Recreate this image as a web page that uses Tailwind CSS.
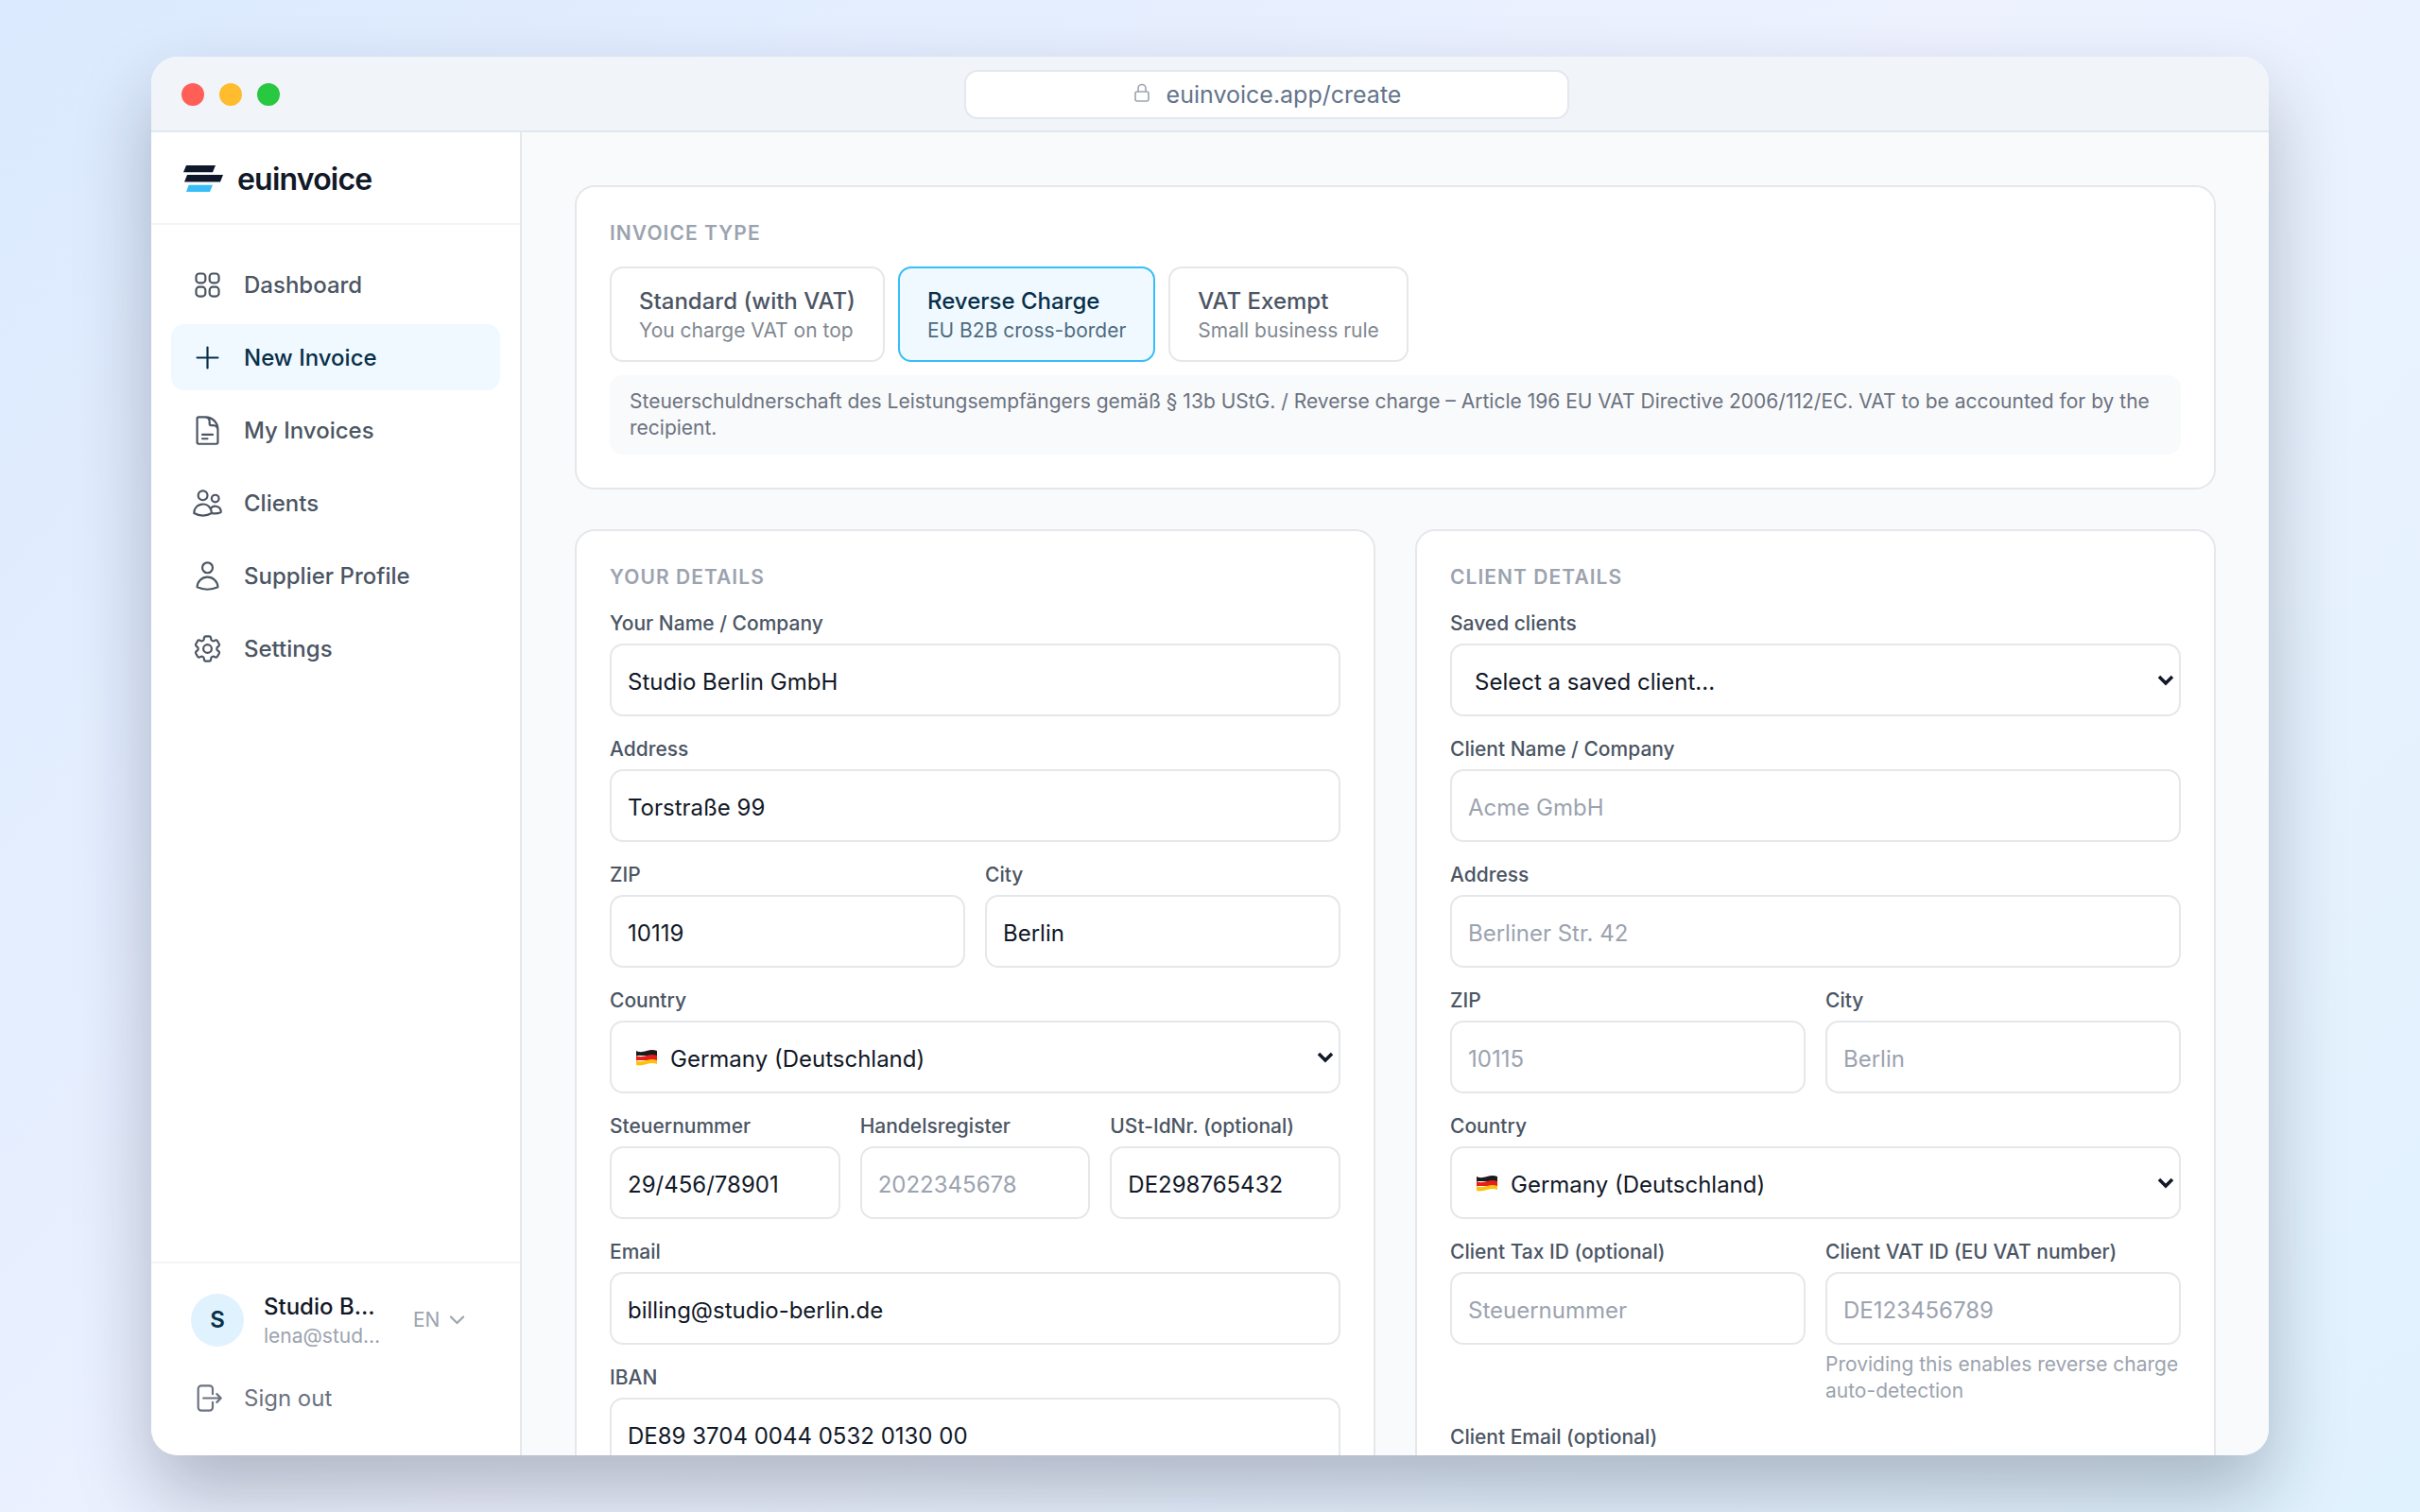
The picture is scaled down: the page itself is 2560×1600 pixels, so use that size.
<!DOCTYPE html>
<html lang="en">
<head>
    <meta charset="UTF-8">
    <meta name="viewport" content="width=device-width, initial-scale=1.0">
    <title>euinvoice - New Invoice</title>
    <!-- Tailwind CSS CDN -->
    <script src="https://cdn.jsdelivr.net/npm/@tailwindcss/browser@4"></script>
</head>
<body class="h-screen overflow-hidden bg-linear-135 from-[#dbeafe] via-[#eef2ff] to-[#e0f2fe] px-[160px] py-[60px] font-['Inter',sans-serif] text-[24px] leading-[35px] text-[#111827]">
    <!-- Browser window -->
    <div class="flex h-full flex-col overflow-hidden rounded-[28px] bg-white shadow-[0_40px_80px_rgba(15,23,42,0.27)]">
        <!-- Title bar -->
        <div class="flex h-[80px] shrink-0 items-center gap-4 border-b-2 border-slate-200 bg-slate-100 px-8 pt-[2px]">
            <div class="flex gap-4">
                <span class="size-6 rounded-full bg-[#ff5f57]"></span>
                <span class="size-6 rounded-full bg-[#febc2e]"></span>
                <span class="size-6 rounded-full bg-[#28c840]"></span>
            </div>
            <div class="flex flex-1 justify-center">
                <div class="flex h-[52px] w-[640px] items-center justify-center gap-4 rounded-[14px] border-2 border-slate-200 bg-white text-[25px] text-[#64748b]">
                    <svg class="mb-1 h-5 w-5 text-[#9ca3af]" viewBox="0 0 20 20" fill="none" stroke="currentColor" stroke-width="1.6">
                        <rect x="3" y="9" width="14" height="10" rx="2" />
                        <path d="M6 9V5.5a4 4 0 0 1 8 0V9" />
                    </svg>
                    <span>euinvoice.app/create</span>
                </div>
            </div>
        </div>

        <div class="flex min-h-0 flex-1">
            <!-- Sidebar -->
            <aside class="flex w-[392px] shrink-0 flex-col border-r-2 border-[#e5e7eb] bg-white">
                <a href="#" class="flex h-[98px] items-center gap-[15px] border-b-2 border-[#f3f4f6] px-[34px] pt-[2px] text-[32px] font-semibold tracking-tight">
                    <svg class="h-7 w-[42px]" viewBox="0 0 42 28">
                        <path fill="#0f172a" d="M3 0h31l-3 7.300H0zM4 10h38l-3 7.600H1z" />
                        <path fill="#38bdf8" d="M5.600 20.700h25.400l-3 7.300H3z" />
                    </svg>
                    euinvoice
                </a>
                <nav class="flex flex-1 flex-col gap-[7px] px-[21px] py-7 font-medium text-[#4b5563]">
                    <a href="#" class="flex h-[70px] items-center gap-[21px] rounded-[14px] px-[21px]">
                        <svg class="size-[35px]" viewBox="0 0 24 24" fill="none" stroke="currentColor" stroke-width="1.5" stroke-linecap="round" stroke-linejoin="round"><path d="M3.75 6A2.25 2.25 0 0 1 6 3.750h2.250A2.250 2.250 0 0 1 10.500 6v2.250a2.250 2.250 0 0 1-2.250 2.250H6a2.250 2.250 0 0 1-2.250-2.250V6ZM3.750 15.750A2.250 2.250 0 0 1 6 13.500h2.250a2.250 2.250 0 0 1 2.250 2.250V18a2.250 2.250 0 0 1-2.250 2.250H6A2.250 2.250 0 0 1 3.750 18v-2.250ZM13.500 6a2.250 2.250 0 0 1 2.250-2.250H18A2.250 2.250 0 0 1 20.250 6v2.250A2.250 2.250 0 0 1 18 10.500h-2.250a2.250 2.250 0 0 1-2.250-2.250V6ZM13.500 15.750a2.250 2.250 0 0 1 2.250-2.250H18a2.250 2.250 0 0 1 2.250 2.250V18A2.250 2.250 0 0 1 18 20.250h-2.250A2.250 2.250 0 0 1 13.500 18v-2.250Z" /></svg>
                        Dashboard
                    </a>
                    <a href="#" class="flex h-[70px] items-center gap-[21px] rounded-[14px] bg-[#f0f9ff] px-[21px] text-[#082f49]">
                        <svg class="size-[35px]" viewBox="0 0 24 24" fill="none" stroke="currentColor" stroke-width="1.5" stroke-linecap="round" stroke-linejoin="round"><path d="M12 4.500v15m7.500-7.500h-15" /></svg>
                        New Invoice
                    </a>
                    <a href="#" class="flex h-[70px] items-center gap-[21px] rounded-[14px] px-[21px]">
                        <svg class="size-[35px]" viewBox="0 0 24 24" fill="none" stroke="currentColor" stroke-width="1.5" stroke-linecap="round" stroke-linejoin="round"><path d="M19.500 14.250v-2.625a3.375 3.375 0 0 0-3.375-3.375h-1.500A1.125 1.125 0 0 1 13.500 7.125v-1.500a3.375 3.375 0 0 0-3.375-3.375H8.250m0 12.750h7.500m-7.500 3H12M10.500 2.250H5.625c-.621 0-1.125.504-1.125 1.125v17.250c0 .621.504 1.125 1.125 1.125h12.750c.621 0 1.125-.504 1.125-1.125V11.250a9 9 0 0 0-9-9Z" /></svg>
                        My Invoices
                    </a>
                    <a href="#" class="flex h-[70px] items-center gap-[21px] rounded-[14px] px-[21px]">
                        <svg class="size-[35px]" viewBox="0 0 24 24" fill="none" stroke="currentColor" stroke-width="1.5" stroke-linecap="round" stroke-linejoin="round"><path d="M15 19.128a9.380 9.380 0 0 0 2.625.372 9.337 9.337 0 0 0 4.121-.952 4.125 4.125 0 0 0-7.533-2.493M15 19.128v-.003c0-1.113-.285-2.160-.786-3.070M15 19.128v.106A12.318 12.318 0 0 1 8.624 21c-2.331 0-4.512-.645-6.374-1.766l-.001-.109a6.375 6.375 0 0 1 11.964-3.070M12 6.375a3.375 3.375 0 1 1-6.750 0 3.375 3.375 0 0 1 6.750 0Zm8.250 2.250a2.625 2.625 0 1 1-5.250 0 2.625 2.625 0 0 1 5.250 0Z" /></svg>
                        Clients
                    </a>
                    <a href="#" class="flex h-[70px] items-center gap-[21px] rounded-[14px] px-[21px]">
                        <svg class="size-[35px]" viewBox="0 0 24 24" fill="none" stroke="currentColor" stroke-width="1.5" stroke-linecap="round" stroke-linejoin="round"><path d="M15.750 6a3.750 3.750 0 1 1-7.500 0 3.750 3.750 0 0 1 7.500 0ZM4.501 20.118a7.500 7.500 0 0 1 14.998 0A17.933 17.933 0 0 1 12 21.750c-2.676 0-5.216-.584-7.499-1.632Z" /></svg>
                        Supplier Profile
                    </a>
                    <a href="#" class="flex h-[70px] items-center gap-[21px] rounded-[14px] px-[21px]">
                        <svg class="size-[35px]" viewBox="0 0 24 24" fill="none" stroke="currentColor" stroke-width="1.5" stroke-linecap="round" stroke-linejoin="round"><path d="M9.594 3.940c.09-.542.56-.94 1.110-.94h2.593c.55 0 1.020.398 1.110.94l.213 1.281c.063.374.313.686.645.87.074.04.147.083.22.127.325.196.72.257 1.075.124l1.217-.456a1.125 1.125 0 0 1 1.370.49l1.296 2.247a1.125 1.125 0 0 1-.26 1.431l-1.003.827c-.293.241-.438.613-.43.992a7.723 7.723 0 0 1 0 .255c-.008.378.137.75.43.991l1.004.827c.424.35.534.955.26 1.430l-1.298 2.247a1.125 1.125 0 0 1-1.369.491l-1.217-.456c-.355-.133-.75-.072-1.076.124a6.470 6.470 0 0 1-.22.128c-.331.183-.581.495-.644.869l-.213 1.281c-.09.543-.56.94-1.110.94h-2.594c-.55 0-1.019-.398-1.110-.94l-.213-1.281c-.062-.374-.312-.686-.644-.87a6.520 6.520 0 0 1-.22-.127c-.325-.196-.72-.257-1.076-.124l-1.217.456a1.125 1.125 0 0 1-1.369-.49l-1.297-2.247a1.125 1.125 0 0 1 .26-1.431l1.004-.827c.292-.24.437-.613.43-.991a6.932 6.932 0 0 1 0-.255c.007-.38-.138-.751-.43-.992l-1.004-.827a1.125 1.125 0 0 1-.26-1.430l1.297-2.247a1.125 1.125 0 0 1 1.370-.491l1.216.456c.356.133.751.072 1.076-.124.072-.044.146-.086.22-.128.332-.183.582-.495.644-.869l.214-1.280Z" /><path d="M15 12a3 3 0 1 1-6 0 3 3 0 0 1 6 0Z" /></svg>
                        Settings
                    </a>
                </nav>
                <div class="flex flex-col gap-4 border-t-2 border-[#f3f4f6] px-[21px] pt-7 pb-[26px]">
                    <div class="flex items-center px-[21px]">
                        <span class="flex size-14 shrink-0 items-center justify-center rounded-full bg-[#e0f2fe] font-semibold text-[#082f49]">S</span>
                        <div class="ml-[21px] w-[126px]">
                            <p class="truncate font-medium">Studio Berlin GmbH</p>
                            <p class="truncate text-[21px] leading-7 text-[#9ca3af]">lena@studio-berlin.de</p>
                        </div>
                        <button type="button" class="ml-8 flex items-center gap-2 text-[21px] text-[#9ca3af]">
                            EN
                            <svg class="size-[21px]" viewBox="0 0 24 24" fill="none" stroke="currentColor" stroke-width="2.5" stroke-linecap="round" stroke-linejoin="round"><path d="m19.500 8.500-7.500 7.500-7.500-7.500" /></svg>
                        </button>
                    </div>
                    <button type="button" class="flex h-[70px] items-center gap-[21px] px-[21px] text-[#6b7280]">
                        <svg class="size-[35px]" viewBox="0 0 24 24" fill="none" stroke="currentColor" stroke-width="1.5" stroke-linecap="round" stroke-linejoin="round"><path d="M15.750 9V5.250A2.250 2.250 0 0 0 13.500 3h-6a2.250 2.250 0 0 0-2.250 2.250v13.500A2.250 2.250 0 0 0 7.500 21h6a2.250 2.250 0 0 0 2.250-2.250V15m3 0 3-3m0 0-3-3m3 3H9" /></svg>
                        Sign out
                    </button>
                </div>
            </aside>

            <!-- Invoice form -->
            <main class="flex min-w-0 flex-1 flex-col gap-[42px] overflow-hidden bg-[#f9fafb] p-14">
                <section class="shrink-0 rounded-[21px] border-2 border-[#e5e7eb] bg-white p-[35px]">
                    <h2 class="mb-[21px] text-[21px] leading-7 font-semibold tracking-wider text-[#9ca3af] uppercase">Invoice Type</h2>
                    <div class="flex gap-[14px]">
                        <button type="button" class="rounded-[14px] border-2 border-[#e5e7eb] px-[29px] py-[17px] text-left text-[#4b5563]">
                            <span class="block font-medium">Standard (with VAT)</span>
                            <span class="block text-[21px] leading-7 opacity-70">You charge VAT on top</span>
                        </button>
                        <button type="button" class="rounded-[14px] border-2 border-[#38bdf8] bg-[#f0f9ff] px-[29px] py-[17px] text-left text-[#082f49]">
                            <span class="block font-medium">Reverse Charge</span>
                            <span class="block text-[21px] leading-7 opacity-70">EU B2B cross-border</span>
                        </button>
                        <button type="button" class="rounded-[14px] border-2 border-[#e5e7eb] px-[29px] py-[17px] text-left text-[#4b5563]">
                            <span class="block font-medium">VAT Exempt</span>
                            <span class="block text-[21px] leading-7 opacity-70">Small business rule</span>
                        </button>
                    </div>
                    <p class="mt-[14px] rounded-[14px] bg-[#f9fafb] px-[21px] py-[14px] text-[21px] leading-7 text-[#6b7280]">Steuerschuldnerschaft des Leistungsempfängers gemäß § 13b UStG. / Reverse charge – Article 196 EU VAT Directive 2006/112/EC. VAT to be accounted for by the recipient.</p>
                </section>

                <div class="grid grid-cols-2 gap-[42px]">
                    <!-- Supplier -->
                    <section class="flex flex-col gap-[21px] rounded-[21px] border-2 border-[#e5e7eb] bg-white p-[35px]">
                        <h2 class="text-[21px] leading-7 font-semibold tracking-wider text-[#9ca3af] uppercase">Your Details</h2>
                        <div>
                            <label for="name" class="mb-[7px] block text-[21px] leading-7 font-medium text-[#4b5563]">Your Name / Company</label>
                            <input id="name" type="text" value="Studio Berlin GmbH" class="h-[77px] w-full rounded-[14px] border-2 border-[#e5e7eb] px-[17px] pt-[3px]">
                        </div>
                        <div>
                            <label for="address" class="mb-[7px] block text-[21px] leading-7 font-medium text-[#4b5563]">Address</label>
                            <input id="address" type="text" value="Torstraße 99" class="h-[77px] w-full rounded-[14px] border-2 border-[#e5e7eb] px-[17px] pt-[3px]">
                        </div>
                        <div class="grid grid-cols-2 gap-[21px]">
                            <div>
                                <label for="zip" class="mb-[7px] block text-[21px] leading-7 font-medium text-[#4b5563]">ZIP</label>
                                <input id="zip" type="text" value="10119" class="h-[77px] w-full rounded-[14px] border-2 border-[#e5e7eb] px-[17px] pt-[3px]">
                            </div>
                            <div>
                                <label for="city" class="mb-[7px] block text-[21px] leading-7 font-medium text-[#4b5563]">City</label>
                                <input id="city" type="text" value="Berlin" class="h-[77px] w-full rounded-[14px] border-2 border-[#e5e7eb] px-[17px] pt-[3px]">
                            </div>
                        </div>
                        <div>
                            <label for="country" class="mb-[7px] block text-[21px] leading-7 font-medium text-[#4b5563]">Country</label>
                            <div class="relative">
                                <select id="country" class="h-[77px] w-full appearance-none rounded-[14px] border-2 border-[#e5e7eb] bg-white pt-[3px] pr-10 pl-[62px]">
                                    <option>Germany (Deutschland)</option>
                                </select>
                                <svg class="pointer-events-none absolute top-[30px] left-[27px] h-[18px] w-6" viewBox="0 0 24 18">
                                    <path fill="#1b1b1b" d="M1 2c4 2 7 1 11 0s7-1.500 11 0v5H1z" />
                                    <path fill="#e5201c" d="M1 7c4 2 7 1 11 0s7-1.500 11 0v5H1z" />
                                    <path fill="#fbc20e" d="M1 12c4 2 7 1 11 0s7-1.500 11 0v4c-4-1.500-7-1-11 0s-7 2-11 1z" />
                                </svg>
                                <svg class="pointer-events-none absolute top-[33px] right-[7px] h-3 w-[18px]" viewBox="0 0 18 12" fill="none" stroke="currentColor" stroke-width="3.500"><path d="m2 2 7 7 7-7" /></svg>
                            </div>
                        </div>
                        <div class="grid grid-cols-3 gap-[21px]">
                            <div>
                                <label for="tax" class="mb-[7px] block text-[21px] leading-7 font-medium text-[#4b5563]">Steuernummer</label>
                                <input id="tax" type="text" value="29/456/78901" class="h-[77px] w-full rounded-[14px] border-2 border-[#e5e7eb] px-[17px] pt-[3px]">
                            </div>
                            <div>
                                <label for="register" class="mb-[7px] block text-[21px] leading-7 font-medium text-[#4b5563]">Handelsregister</label>
                                <input id="register" type="text" placeholder="2022345678" class="h-[77px] w-full rounded-[14px] border-2 border-[#e5e7eb] px-[17px] pt-[3px] placeholder:text-[#9ca3af]">
                            </div>
                            <div>
                                <label for="vat" class="mb-[7px] block text-[21px] leading-7 font-medium text-[#4b5563]">USt-IdNr. (optional)</label>
                                <input id="vat" type="text" value="DE298765432" class="h-[77px] w-full rounded-[14px] border-2 border-[#e5e7eb] px-[17px] pt-[3px]">
                            </div>
                        </div>
                        <div>
                            <label for="email" class="mb-[7px] block text-[21px] leading-7 font-medium text-[#4b5563]">Email</label>
                            <input id="email" type="email" value="billing@studio-berlin.de" class="h-[77px] w-full rounded-[14px] border-2 border-[#e5e7eb] px-[17px] pt-[3px]">
                        </div>
                        <div>
                            <label for="iban" class="mb-[7px] block text-[21px] leading-7 font-medium text-[#4b5563]">IBAN</label>
                            <input id="iban" type="text" value="DE89 3704 0044 0532 0130 00" class="h-[77px] w-full rounded-[14px] border-2 border-[#e5e7eb] px-[17px] pt-[3px]">
                        </div>
                    </section>

                    <!-- Client -->
                    <section class="flex flex-col gap-[21px] rounded-[21px] border-2 border-[#e5e7eb] bg-white p-[35px]">
                        <h2 class="text-[21px] leading-7 font-semibold tracking-wider text-[#9ca3af] uppercase">Client Details</h2>
                        <div>
                            <label for="saved" class="mb-[7px] block text-[21px] leading-7 font-medium text-[#4b5563]">Saved clients</label>
                            <div class="relative">
                                <select id="saved" class="h-[77px] w-full appearance-none rounded-[14px] border-2 border-[#e5e7eb] bg-white pt-[3px] pr-10 pl-[24px]">
                                    <option>Select a saved client...</option>
                                </select>
                                <svg class="pointer-events-none absolute top-[33px] right-[7px] h-3 w-[18px]" viewBox="0 0 18 12" fill="none" stroke="currentColor" stroke-width="3.500"><path d="m2 2 7 7 7-7" /></svg>
                            </div>
                        </div>
                        <div>
                            <label for="client-name" class="mb-[7px] block text-[21px] leading-7 font-medium text-[#4b5563]">Client Name / Company</label>
                            <input id="client-name" type="text" placeholder="Acme GmbH" class="h-[77px] w-full rounded-[14px] border-2 border-[#e5e7eb] px-[17px] pt-[3px] placeholder:text-[#9ca3af]">
                        </div>
                        <div>
                            <label for="client-address" class="mb-[7px] block text-[21px] leading-7 font-medium text-[#4b5563]">Address</label>
                            <input id="client-address" type="text" placeholder="Berliner Str. 42" class="h-[77px] w-full rounded-[14px] border-2 border-[#e5e7eb] px-[17px] pt-[3px] placeholder:text-[#9ca3af]">
                        </div>
                        <div class="grid grid-cols-2 gap-[21px]">
                            <div>
                                <label for="client-zip" class="mb-[7px] block text-[21px] leading-7 font-medium text-[#4b5563]">ZIP</label>
                                <input id="client-zip" type="text" placeholder="10115" class="h-[77px] w-full rounded-[14px] border-2 border-[#e5e7eb] px-[17px] pt-[3px] placeholder:text-[#9ca3af]">
                            </div>
                            <div>
                                <label for="client-city" class="mb-[7px] block text-[21px] leading-7 font-medium text-[#4b5563]">City</label>
                                <input id="client-city" type="text" placeholder="Berlin" class="h-[77px] w-full rounded-[14px] border-2 border-[#e5e7eb] px-[17px] pt-[3px] placeholder:text-[#9ca3af]">
                            </div>
                        </div>
                        <div>
                            <label for="client-country" class="mb-[7px] block text-[21px] leading-7 font-medium text-[#4b5563]">Country</label>
                            <div class="relative">
                                <select id="client-country" class="h-[77px] w-full appearance-none rounded-[14px] border-2 border-[#e5e7eb] bg-white pt-[3px] pr-10 pl-[62px]">
                                    <option>Germany (Deutschland)</option>
                                </select>
                                <svg class="pointer-events-none absolute top-[30px] left-[27px] h-[18px] w-6" viewBox="0 0 24 18">
                                    <path fill="#1b1b1b" d="M1 2c4 2 7 1 11 0s7-1.500 11 0v5H1z" />
                                    <path fill="#e5201c" d="M1 7c4 2 7 1 11 0s7-1.500 11 0v5H1z" />
                                    <path fill="#fbc20e" d="M1 12c4 2 7 1 11 0s7-1.500 11 0v4c-4-1.500-7-1-11 0s-7 2-11 1z" />
                                </svg>
                                <svg class="pointer-events-none absolute top-[33px] right-[7px] h-3 w-[18px]" viewBox="0 0 18 12" fill="none" stroke="currentColor" stroke-width="3.500"><path d="m2 2 7 7 7-7" /></svg>
                            </div>
                        </div>
                        <div class="grid grid-cols-2 gap-[21px]">
                            <div>
                                <label for="client-tax" class="mb-[7px] block text-[21px] leading-7 font-medium text-[#4b5563]">Client Tax ID (optional)</label>
                                <input id="client-tax" type="text" placeholder="Steuernummer" class="h-[77px] w-full rounded-[14px] border-2 border-[#e5e7eb] px-[17px] pt-[3px] placeholder:text-[#9ca3af]">
                            </div>
                            <div>
                                <label for="client-vat" class="mb-[7px] block text-[21px] leading-7 font-medium text-[#4b5563]">Client VAT ID (EU VAT number)</label>
                                <input id="client-vat" type="text" placeholder="DE123456789" class="h-[77px] w-full rounded-[14px] border-2 border-[#e5e7eb] px-[17px] pt-[3px] placeholder:text-[#9ca3af]">
                                <p class="mt-[7px] text-[21px] leading-7 text-[#9ca3af]">Providing this enables reverse charge auto-detection</p>
                            </div>
                        </div>
                        <div>
                            <label for="client-email" class="mb-[7px] block text-[21px] leading-7 font-medium text-[#4b5563]">Client Email (optional)</label>
                            <input id="client-email" type="email" class="h-[77px] w-full rounded-[14px] border-2 border-[#e5e7eb] px-[17px] pt-[3px]">
                        </div>
                    </section>
                </div>
            </main>
        </div>
    </div>
</body>
</html>
